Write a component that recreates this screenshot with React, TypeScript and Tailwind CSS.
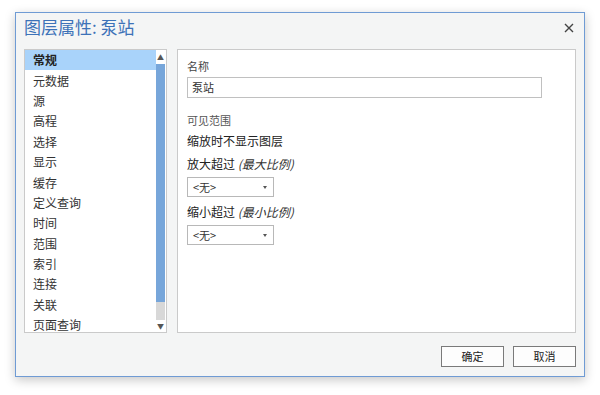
const font = "font-['Microsoft_YaHei','Noto_Sans_CJK_SC','Noto_Sans',sans-serif]";

const items = [
  "常规",
  "元数据",
  "源",
  "高程",
  "选择",
  "显示",
  "缓存",
  "定义查询",
  "时间",
  "范围",
  "索引",
  "连接",
  "关联",
  "页面查询",
];

function SelectBox() {
  return (
    <div className="mt-[6px] w-[87px] h-[20px] border border-[#b8b8b8] bg-white flex items-center justify-between pl-[5px] pr-[6px] text-[11px] text-[#333]">
      <span>&lt;无&gt;</span>
      <svg width="4" height="3" viewBox="0 0 4 3">
        <path d="M0 0H4L2 3Z" fill="#555" />
      </svg>
    </div>
  );
}

export default function App() {
  return (
    <div className={`w-[600px] h-[395px] bg-white pt-[12px] pl-[15px] ${font}`}>
      <div className="w-[570px] h-[365px] border border-[#6f9bd4] bg-[#f4f5f5] flex flex-col shadow-[0_3px_10px_rgba(0,0,0,0.22)]">
        {/* Title */}
        <div className="h-[26px] flex items-center justify-between pl-[8px] pr-[10px]">
          <span className="text-[17px] text-[#3d72b8] leading-none">图层属性: 泵站</span>
          <svg width="10" height="10" viewBox="0 0 10 10" className="mt-[3px]">
            <path d="M1 1L9 9M9 1L1 9" stroke="#444" strokeWidth="1.4" />
          </svg>
        </div>

        <div className="mt-[10px] h-[284px] flex gap-[10px] px-[8px]">
          {/* Category list */}
          <div className="w-[143px] border border-[#cacaca] bg-white flex overflow-hidden">
            <div className="flex-1 flex flex-col">
              {items.map((it, i) => (
                <div
                  key={it}
                  className={`h-[20.4px] shrink-0 flex items-center pl-[8px] text-[12px] ${
                    i === 0 ? "bg-[#a9d3fa] font-bold text-[#222]" : "text-[#333]"
                  }`}
                >
                  {it}
                </div>
              ))}
            </div>
            <div className="w-[9px] mr-[1px] flex flex-col bg-[#d8d8d8]">
              <div className="h-[14px] bg-white flex items-center justify-center text-[7px] text-[#555] leading-none">▲</div>
              <div className="h-[238px] bg-[#77a6da]" />
              <div className="flex-1" />
              <div className="h-[12px] bg-white flex items-center justify-center text-[7px] text-[#555] leading-none">▼</div>
            </div>
          </div>

          {/* Settings panel */}
          <div className="flex-1 border border-[#cacaca] bg-white pl-[9px] pt-[9px] flex flex-col">
            <div className="text-[11px] text-[#444] leading-[14px]">名称</div>
            <div className="mt-[4px] w-[355px] h-[21px] border border-[#c0c0c0] flex items-center pl-[4px] text-[11px] text-[#333]">
              泵站
            </div>
            <div className="mt-[15px] text-[11px] text-[#555] leading-[14px]">可见范围</div>
            <div className="mt-[7px] text-[12px] text-[#222] leading-[14px]">缩放时不显示图层</div>
            <div className="mt-[9px] text-[12px] text-[#222] leading-[14px]">
              放大超过 <i className="text-[#333]">(最大比例)</i>
            </div>
            <SelectBox />
            <div className="mt-[8px] text-[12px] text-[#222] leading-[14px]">
              缩小超过 <i className="text-[#333]">(最小比例)</i>
            </div>
            <SelectBox />
          </div>
        </div>

        {/* Buttons */}
        <div className="mt-[13px] flex justify-end gap-[9px] pr-[8px]">
          <button className="w-[63px] h-[21px] border border-[#7a7a7a] bg-[#fdfdfd] text-[11px] text-[#222]">确定</button>
          <button className="w-[63px] h-[21px] border border-[#7a7a7a] bg-[#fdfdfd] text-[11px] text-[#222]">取消</button>
        </div>
      </div>
    </div>
  );
}
